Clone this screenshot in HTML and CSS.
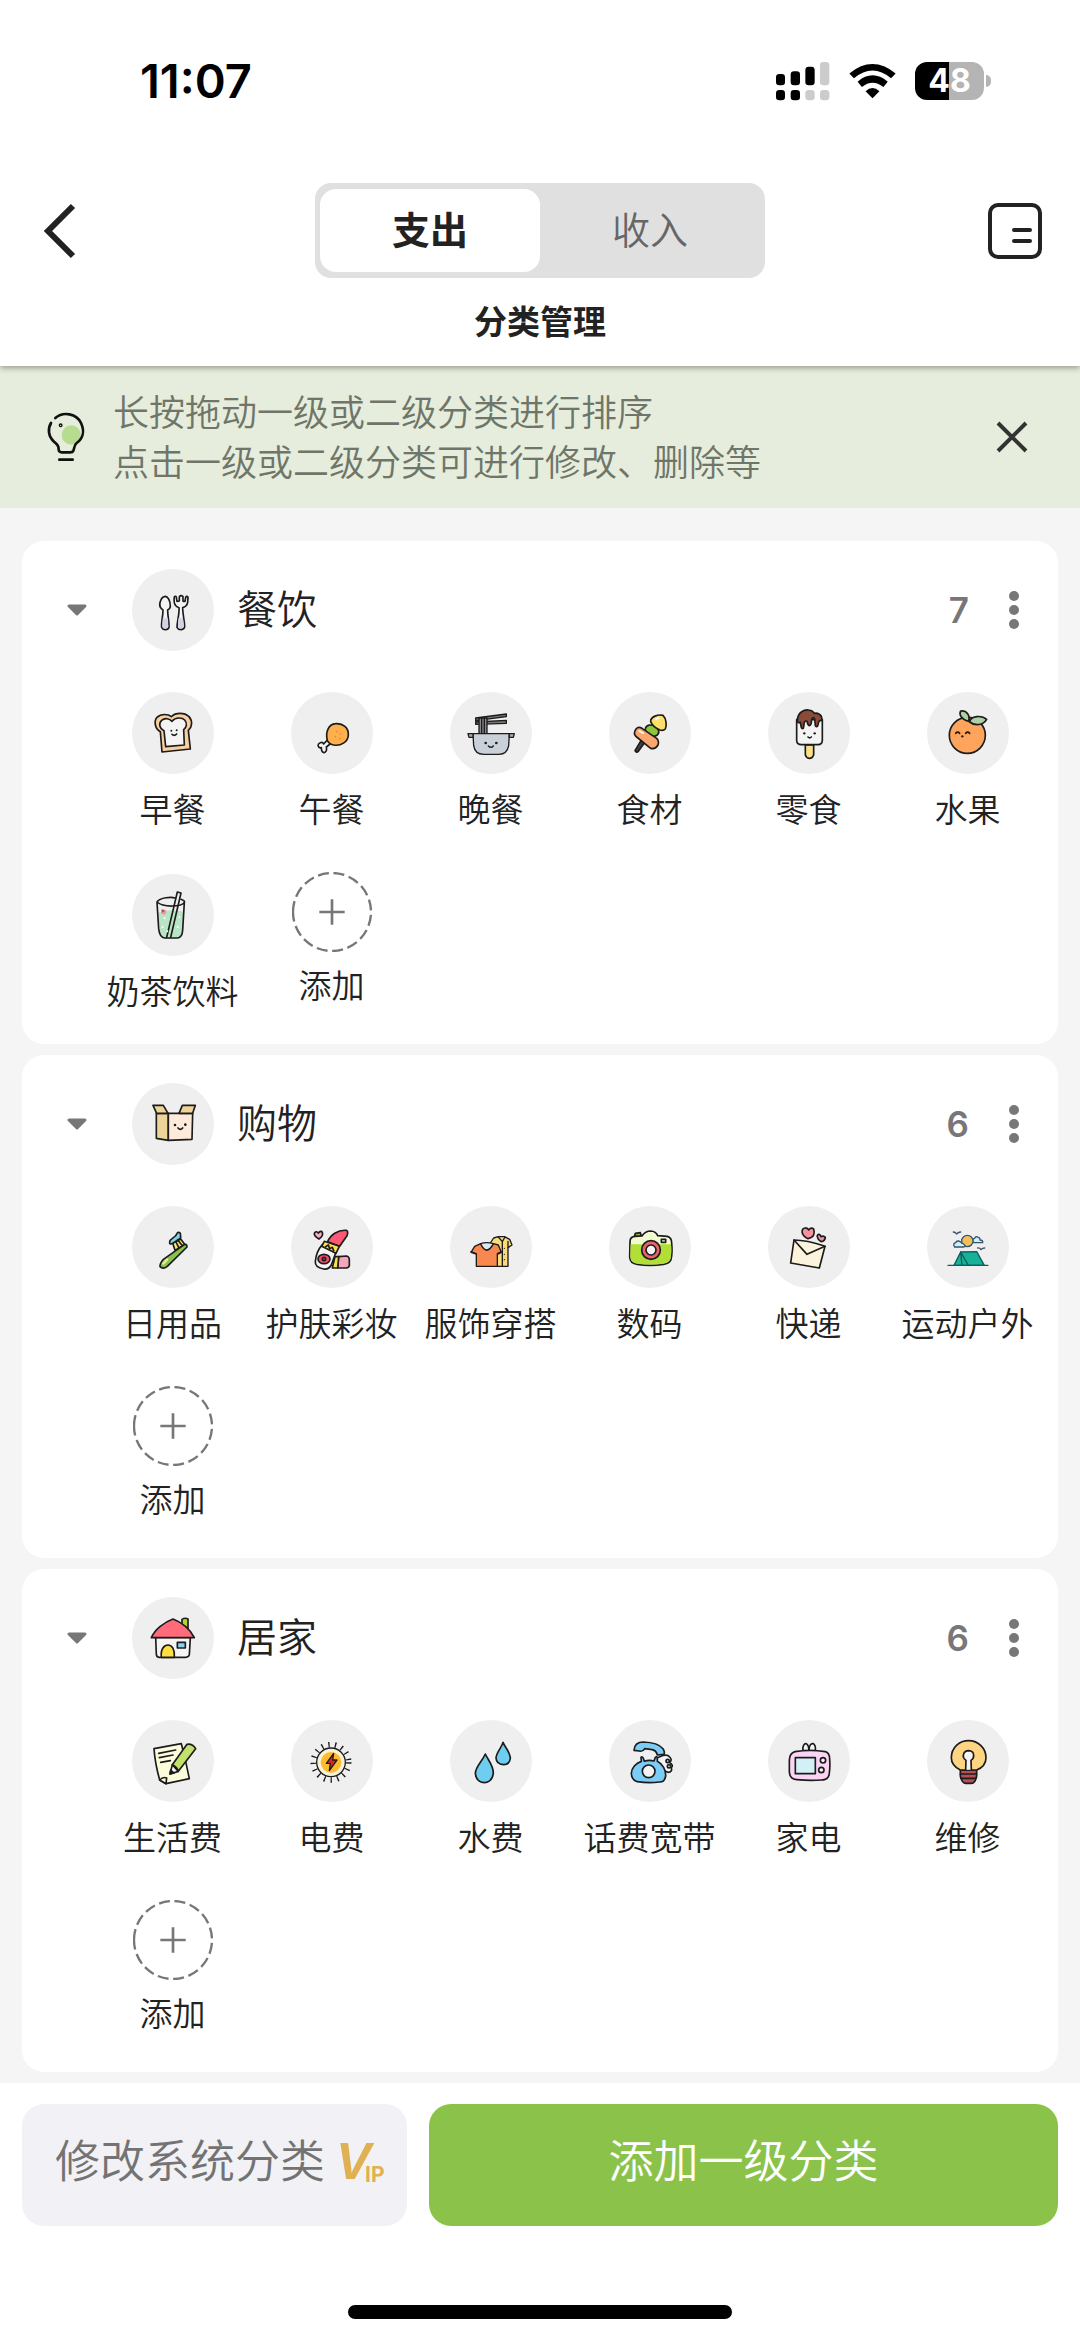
FILE: index.html
```html
<!DOCTYPE html>
<html lang="zh-CN">
<head>
<meta charset="utf-8">
<meta name="viewport" content="width=device-width, initial-scale=1">
<title>分类管理</title>
<link rel="stylesheet" href="styles.css">
</head>
<body>
<header class="header">
  <div class="status">
    <span class="status-time">11:07</span>
    <div class="status-icons">
      <svg class="signal" viewBox="0 0 162 117" aria-hidden="true">
        <rect x="0" y="36" width="27" height="34" rx="10"/><rect x="44" y="28" width="28" height="42" rx="10"/><rect x="88" y="14" width="28" height="56" rx="10"/><rect class="off" x="132" y="0" width="28" height="70" rx="10"/>
        <rect x="0" y="84" width="27" height="31" rx="10"/><rect x="44" y="84" width="28" height="31" rx="10"/><rect class="off" x="88" y="84" width="28" height="31" rx="10"/><rect class="off" x="132" y="84" width="28" height="31" rx="10"/>
      </svg>
      <svg class="wifi" viewBox="264 66 142 108" aria-hidden="true">
        <path d="M335 172 L314 151 Q335 131 356 151 Z"/>
        <path d="M290 122 Q335 84 381 122 L368 138 Q335 112 303 138 Z"/>
        <path d="M265 97 Q335 40 405 97 L391 112 Q335 65 279 112 Z"/>
      </svg>
      <div class="battery"><span class="battery-level">48</span><span class="battery-cap"></span></div>
    </div>
  </div>
  <div class="header-row">
    <button class="icon-button" type="button" aria-label="返回">
      <svg class="icon-back" viewBox="0 0 44 58"><path d="M35 4 L10 29 L35 54"/></svg>
    </button>
    <div class="toggle" role="tablist">
      <button class="toggle-item active" type="button" role="tab" aria-selected="true">支出</button>
      <button class="toggle-item" type="button" role="tab" aria-selected="false">收入</button>
    </div>
    <button class="icon-button end" type="button" aria-label="菜单">
      <svg class="icon-list" viewBox="0 0 54 56"><rect x="2" y="2" width="50" height="52" rx="8"/><path d="M26 27 H42 M26 38 H42"/></svg>
    </button>
  </div>
  <h1 class="title">分类管理</h1>
</header>

<section class="banner">
  <svg class="icon-tip" viewBox="48 62 120 156" aria-hidden="true">
    <circle class="tip-glow" cx="124" cy="134" r="29"/>
    <path d="M76 83 C100 62 140 70 153 98 C166 126 156 147 140 158 C131 165 133 176 130 181 Q128 186 120 186 H95 Q87 186 86 178 C86 166 82 163 73 155 C54 138 53 115 63 98"/>
    <path d="M88 208 H128"/>
    <circle cx="92" cy="105" r="2"/>
  </svg>
  <p class="banner-text">长按拖动一级或二级分类进行排序<br>点击一级或二级分类可进行修改、删除等</p>
  <button class="icon-button" type="button" aria-label="关闭">
    <svg class="icon-close" viewBox="0 0 34 34"><path d="M3 3 L31 31 M31 3 L3 31"/></svg>
  </button>
</section>

<main class="list">
  <section class="card">
    <div class="card-head">
      <button class="icon-button" type="button" aria-label="折叠"><svg class="icon-fold" viewBox="0 0 20 14"><path d="M2 3 H18 L10 11 Z"/></svg></button>
      <svg class="pic" viewBox="97 57 246 246" aria-hidden="true">
        <path fill="#f4f4f6" d="M197 139 C184 140 177 162 182 172 Q186 178 190 180 C190 200 184 218 186 232 Q190 240 198 239 Q206 239 208 232 C209 215 204 200 204 180 Q212 176 212 168 C212 155 206 140 197 139 Z"/>
        <path class="nostroke" fill="#d9cfe6" d="M189 205 H205 L206 231 Q197 240 188 231 Z"/>
        <path fill="#f4f4f6" d="M226 139 Q222 139 224 158 Q226 169 238 173 C240 190 232 215 232 232 Q236 240 245 239 Q254 238 255 230 C255 213 249 195 249 173 Q262 169 264 157 L265 142 Q261 136 258 142 L256 154 H250 V140 Q244 134 239 140 V153 L232 154 L230 142 Q229 138 226 139 Z"/>
        <path class="nostroke" fill="#d9cfe6" d="M236 205 H250 L253 230 Q244 240 235 231 Z"/>
      </svg>
      <h2 class="card-name">餐饮</h2>
      <span class="card-count">7</span>
      <button class="icon-button" type="button" aria-label="更多"><svg class="icon-more" viewBox="0 0 20 40"><circle cx="10" cy="6" r="5"/><circle cx="10" cy="20" r="5"/><circle cx="10" cy="34" r="5"/></svg></button>
    </div>
    <div class="grid">
      <button class="item" type="button">
        <svg class="pic" viewBox="97 427 246 246" aria-hidden="true">
          <path fill="#f8cf9e" d="M182 546 C166 538 162 515 172 503 C184 491 206 493 215 501 C228 488 254 488 268 501 C280 515 277 533 266 542 L272 598 L187 607 Z"/>
          <path fill="#f4f4f4" d="M193 543 C178 536 177 520 186 512 C196 503 210 507 217 515 C228 502 247 503 255 511 C264 521 260 534 252 540 L254 586 L198 591 Z"/>
          <path d="M217 554 Q224 560 231 553"/><circle class="dot" cx="215" cy="543" r="3"/><circle class="dot" cx="231" cy="542" r="3"/>
        </svg>
        <span class="label">早餐</span>
      </button>
      <button class="item" type="button">
        <svg class="pic" viewBox="574 427 246 246" aria-hidden="true">
          <path fill="#f4f4f4" d="M683 571 L672 583 C668 574 655 580 655 588 Q657 596 665 594 Q665 608 674 609 Q683 605 680 592 L695 580 Z"/>
          <path fill="#fdb04c" d="M683 573 C676 545 688 523 708 522 C730 520 747 535 746 555 C746 577 722 590 702 586 Q690 585 683 573 Z"/>
          <g class="nostroke" fill="#e8893a"><circle cx="711" cy="546" r="2.500"/><circle cx="722" cy="553" r="2.500"/><circle cx="707" cy="561" r="2.500"/><circle cx="720" cy="567" r="2.500"/></g>
        </svg>
        <span class="label">午餐</span>
      </button>
      <button class="item" type="button">
        <svg class="pic thin" viewBox="1051 427 246 246" aria-hidden="true">
          <path fill="#777" d="M1128 505 L1220 493 V501 L1128 513 Z M1128 517 L1220 512 V521 L1128 524 Z"/>
          <path fill="#888" d="M1138 505 H1162 V552 H1138 Z M1146 505 V552 M1154 505 V552"/>
          <path fill="#c9d0d8" d="M1120 552 H1229 L1227 588 Q1222 614 1198 614 H1152 Q1126 614 1122 588 Z"/>
          <path fill="#a5acb3" d="M1105 552 H1120 V563 H1108 Z M1229 552 H1244 L1241 563 H1229 Z"/>
          <path d="M1166 589 Q1174 597 1181 589"/><circle class="dot" cx="1158" cy="580" r="4"/><circle class="dot" cx="1190" cy="580" r="4"/>
        </svg>
        <span class="label">晚餐</span>
      </button>
      <button class="item" type="button">
        <svg class="pic" viewBox="87 427 246 246" aria-hidden="true">
          <path fill="#444" d="M183 573 L165 603 Q169 611 175 605 L193 580 Z"/>
          <ellipse fill="#8cc63f" cx="216" cy="543" rx="21" ry="16" transform="rotate(25 216 543)"/>
          <path fill="#fde06c" d="M212 516 C211 500 235 494 249 497 C260 507 260 530 256 538 Q250 544 240 541 Q220 534 212 516 Z"/>
          <path fill="#fba66d" d="M168 538 Q175 530 186 536 L230 566 Q238 574 234 586 Q226 600 212 596 L170 562 Q158 553 168 538 Z"/>
          <path stroke="#fff" d="M178 544 L190 551 M228 509 L236 505"/>
        </svg>
        <span class="label">食材</span>
      </button>
      <button class="item" type="button">
        <svg class="pic" viewBox="564 427 246 246" aria-hidden="true">
          <path fill="#fbe08a" d="M676 586 H701 V615 Q698 626 688 626 Q678 625 676 615 Z"/>
          <path fill="#f4f4f4" d="M650 510 H727 V573 Q726 585 714 585 H664 Q651 585 650 573 Z"/>
          <path fill="#8a4b38" d="M652 514 C652 486 675 479 686 481 Q699 483 703 491 Q716 488 724 500 Q729 515 719 513 Q716 514 714 526 Q711 535 706 528 L704 508 Q700 499 695 510 Q694 528 688 528 Q681 524 682 516 Q676 511 673 519 L670 536 Q664 539 663 529 L661 518 Q654 522 652 514 Z"/>
          <path d="M684 562 Q689 567 694 562"/><circle class="dot" cx="673" cy="551" r="3.500"/><circle class="dot" cx="704" cy="551" r="3.500"/>
        </svg>
        <span class="label">零食</span>
      </button>
      <button class="item" type="button">
        <svg class="pic" viewBox="1041 427 246 246" aria-hidden="true">
          <circle fill="#ffa45c" cx="1162" cy="557" r="54"/>
          <path fill="#aed0a4" d="M1165 515 C1144 508 1136 495 1142 484 C1160 482 1172 497 1165 515 Z M1169 517 C1172 498 1205 496 1220 509 C1210 527 1185 530 1169 517 Z"/>
          <path d="M1127 551 Q1133 544 1139 551 M1157 551 Q1163 544 1169 551"/><circle class="dot" cx="1147" cy="560" r="3.500"/>
        </svg>
        <span class="label">水果</span>
      </button>
      <button class="item" type="button">
        <svg class="pic" viewBox="396 72 246 246" aria-hidden="true">
          <path class="nostroke" fill="#b9e5c5" d="M474 188 Q510 175 550 185 L546 252 Q540 264 525 264 H494 Q482 262 480 250 Z"/>
          <circle class="nostroke" fill="#ee9ba5" cx="491" cy="186" r="8"/><path class="nostroke" fill="#b33849" d="M484 178 L494 182 L488 188 Z"/>
          <path d="M471 156 C480 141 515 141 526 144 M543 148 Q556 153 553 157 C544 171 490 173 471 156 L476 236 Q479 263 494 264 H533 Q547 262 548 240 L553 157"/>
          <path d="M532 126 L543 129 L512 262 M532 126 L500 262"/>
          <g class="nostroke" fill="#fff"><circle cx="494" cy="205" r="3"/><circle cx="488" cy="231" r="3"/><circle cx="538" cy="201" r="3"/><circle cx="533" cy="231" r="3"/><circle cx="502" cy="244" r="3"/></g>
        </svg>
        <span class="label">奶茶饮料</span>
      </button>
      <button class="item add" type="button">
        <svg class="ring" viewBox="-120 -120 240 240" aria-hidden="true"><path class="dash" d="M-117 0 A117 117 0 0 1 117 0 A117 117 0 0 1 -117 0"/><path class="plus" d="M-38 0 H38 M0 -38 V38"/></svg>
        <span class="label">添加</span>
      </button>
    </div>
  </section>

  <section class="card">
    <div class="card-head">
      <button class="icon-button" type="button" aria-label="折叠"><svg class="icon-fold" viewBox="0 0 20 14"><path d="M2 3 H18 L10 11 Z"/></svg></button>
      <svg class="pic" viewBox="396 697 246 246" aria-hidden="true">
        <path fill="#efd49a" d="M469 788 H505 V869 L469 863 Z"/>
        <path fill="#feeadb" d="M505 788 H578 L576 866 L505 869 Z"/>
        <path fill="#efd49a" d="M459 764 H490 L504 788 H470 Z M547 764 H586 L578 788 H537 Z"/>
        <path d="M534 832 Q541 840 548 832"/><circle class="dot" cx="525" cy="823" r="4"/><circle class="dot" cx="556" cy="822" r="4"/>
      </svg>
      <h2 class="card-name">购物</h2>
      <span class="card-count">6</span>
      <button class="icon-button" type="button" aria-label="更多"><svg class="icon-more" viewBox="0 0 20 40"><circle cx="10" cy="6" r="5"/><circle cx="10" cy="20" r="5"/><circle cx="10" cy="34" r="5"/></svg></button>
    </div>
    <div class="grid">
      <button class="item" type="button">
        <svg class="pic" viewBox="97 79 246 246" aria-hidden="true">
          <path fill="#fbe26b" d="M219 191 L243 178 L255 194 L226 212 Z"/>
          <path d="M229 187 L237 203 M236 183 L247 197"/>
          <path fill="#7fd6e0" d="M210 187 C211 175 228 175 231 163 Q235 154 242 161 Q244 172 242 177 C232 180 221 192 214 193 Q209 193 210 187 Z"/>
          <path fill="#86c34b" d="M254 195 Q262 192 262 202 L203 260 Q190 270 181 261 Q180 252 190 240 Z"/>
          <path class="nostroke" fill="#f0e6a0" d="M186 252 L202 235 L207 240 L192 256 Z"/>
        </svg>
        <span class="label">日用品</span>
      </button>
      <button class="item" type="button">
        <svg class="pic" viewBox="574 79 246 246" aria-hidden="true">
          <path fill="#f9a8c6" d="M658 178 Q640 168 645 159 Q650 153 656 160 Q664 151 668 158 Q672 168 658 178 Z"/>
          <path fill="#f4a6bc" d="M717 231 L741 229 Q750 232 749 243 V258 Q747 266 737 265 H714 Z"/>
          <path fill="#fde04c" d="M706 231 H717 L714 265 H698 Z"/>
          <path fill="#ff5877" d="M684 186 C692 166 714 150 740 152 Q747 155 742 168 L720 200 Z"/>
          <path fill="#f4f4f4" d="M668 195 L708 220 L695 256 Q687 270 672 268 Q645 262 647 245 Q650 215 668 195 Z"/>
          <path fill="#fde04c" d="M674 185 L719 200 L709 221 L666 200 Z"/>
          <path d="M678 201 L686 196 L690 207 L698 203 L702 213"/>
          <ellipse fill="#ef4f6d" cx="673" cy="238" rx="18" ry="14"/><circle cx="673" cy="238" r="5"/>
        </svg>
        <span class="label">护肤彩妆</span>
      </button>
      <button class="item" type="button">
        <svg class="pic thin" viewBox="1051 79 246 246" aria-hidden="true">
          <path fill="#f8dc7c" d="M1182 175 L1196 171 H1214 L1230 179 L1237 196 L1225 204 V260 H1180 V205 L1172 190 Z"/>
          <path d="M1196 172 L1208 186 L1216 172 M1208 186 V258 M1225 185 V204"/><circle class="dot" cx="1214" cy="206" r="2"/><circle class="dot" cx="1214" cy="224" r="2"/><circle class="dot" cx="1214" cy="240" r="2"/>
          <path fill="#f98850" d="M1143 192 Q1161 230 1181 192 L1196 196 L1205 218 L1193 224 V260 H1130 V223 L1114 218 L1125 200 Z"/>
          <path fill="#dfe8ee" d="M1143 192 Q1161 186 1181 192 Q1161 230 1143 192 Z"/>
          <path fill="#8ed0c0" d="M1114 216 L1129 222 M1205 216 L1193 222"/>
        </svg>
        <span class="label">服饰穿搭</span>
      </button>
      <button class="item" type="button">
        <svg class="pic" viewBox="87 79 246 246" aria-hidden="true">
          <path fill="#90b53c" d="M163 171 L166 161 L181 159 L184 169 Z"/>
          <path fill="#f1fbcf" d="M150 186 Q150 170 166 170 L186 169 Q196 154 212 154 Q228 155 233 168 L262 170 Q275 173 275 190 Q278 220 273 240 Q268 252 250 254 Q210 260 172 254 Q150 252 149 232 Z"/>
          <path class="nostroke" fill="#b2df35" d="M152 194 H273 Q276 220 271 238 Q267 250 250 252 Q210 257 172 252 Q152 249 151 232 Z"/>
          <circle fill="#e8636a" cx="213" cy="211" r="28"/><circle fill="#f4f4f4" cx="213" cy="211" r="15"/>
          <rect fill="#f4f4f4" x="244" y="179" width="13" height="9"/>
        </svg>
        <span class="label">数码</span>
      </button>
      <button class="item" type="button">
        <svg class="pic" viewBox="564 79 246 246" aria-hidden="true">
          <path fill="#f8909f" d="M684 177 C660 166 664 146 675 145 Q683 144 686 151 Q693 142 701 148 C706 162 701 174 684 177 Z M723 186 C708 175 710 164 717 164 Q722 165 723 171 Q731 167 736 173 Q735 184 723 186 Z"/>
          <path fill="#fcf3dc" d="M642 181 Q680 181 735 200 L718 265 L632 250 Z"/>
          <path d="M642 181 L681 224 L735 200"/>
        </svg>
        <span class="label">快递</span>
      </button>
      <button class="item" type="button">
        <svg class="pic thin" viewBox="1041 79 246 246" aria-hidden="true">
          <path stroke="#3d5160" d="M1120 157 Q1126 157 1130 163 Q1135 157 1142 157 M1193 205 Q1199 204 1203 210 Q1207 205 1214 205"/>
          <path stroke="#33566b" fill="#cdeffa" d="M1179 187 Q1176 177 1184 176 Q1187 168 1195 173 Q1201 175 1200 181 Q1210 181 1208 189 H1182 Z"/>
          <circle stroke="#33566b" fill="#f6bf55" cx="1162" cy="184" r="17"/>
          <path stroke="#33566b" fill="#cdeffa" d="M1124 202 Q1117 192 1127 189 Q1132 180 1142 187 Q1144 192 1150 192 Q1158 198 1152 202 Z"/>
          <path stroke="#0f5d5c" fill="#18b198" d="M1142 217 L1190 216 L1213 257 H1122 Z"/>
          <path stroke="#0f5d5c" d="M1104 257 H1224 M1142 217 L1146 257 M1142 217 L1165 257"/>
        </svg>
        <span class="label">运动户外</span>
      </button>
      <button class="item add" type="button">
        <svg class="ring" viewBox="-120 -120 240 240" aria-hidden="true"><path class="dash" d="M-117 0 A117 117 0 0 1 117 0 A117 117 0 0 1 -117 0"/><path class="plus" d="M-38 0 H38 M0 -38 V38"/></svg>
        <span class="label">添加</span>
      </button>
    </div>
  </section>

  <section class="card">
    <div class="card-head">
      <button class="icon-button" type="button" aria-label="折叠"><svg class="icon-fold" viewBox="0 0 20 14"><path d="M2 3 H18 L10 11 Z"/></svg></button>
      <svg class="pic" viewBox="397 739 246 246" aria-hidden="true">
        <path fill="#b5d334" d="M547 822 V806 Q556 800 565 805 V835 Z"/>
        <path fill="#f4f4f4" d="M468 860 H572 L569 912 Q567 920 558 920 H478 Q470 919 470 910 Z"/>
        <path fill="#ff6b7a" d="M455 861 C465 838 492 815 520 805 C548 815 573 838 584 861 Z"/>
        <path fill="#ffdf3f" d="M485 920 C482 894 494 883 505 883 C517 883 526 896 524 920 Z"/>
        <rect fill="#8ed0ee" x="533" y="875" width="24" height="17"/>
      </svg>
      <h2 class="card-name">居家</h2>
      <span class="card-count">6</span>
      <button class="icon-button" type="button" aria-label="更多"><svg class="icon-more" viewBox="0 0 20 40"><circle cx="10" cy="6" r="5"/><circle cx="10" cy="20" r="5"/><circle cx="10" cy="34" r="5"/></svg></button>
    </div>
    <div class="grid">
      <button class="item" type="button">
        <svg class="pic" viewBox="97 60 246 246" aria-hidden="true">
          <path fill="#fcfbdc" d="M163 146 L245 131 Q258 180 269 236 L199 251 L180 240 Q166 190 163 146 Z"/>
          <path fill="#fcfbdc" d="M180 240 Q190 229 201 234 L199 251 Z"/>
          <path d="M177 160 L228 150 M179 173 L220 165 M183 187 L212 182"/>
          <path fill="#f4f4f4" d="M218 194 L236 214 L211 222 Z"/>
          <path fill="#c2e06c" d="M218 194 L262 133 Q278 130 288 146 L236 214 Q234 202 218 194 Z"/>
          <path fill="#1c1c1c" d="M213 210 L223 219 L211 222 Z"/>
        </svg>
        <span class="label">生活费</span>
      </button>
      <button class="item" type="button">
        <svg class="pic thin" viewBox="574 60 246 246" aria-hidden="true">
          <circle class="rays" cx="694" cy="187" r="53"/>
          <circle fill="#fbf2d8" cx="694" cy="187" r="43"/><circle class="nostroke" fill="#fdbb30" cx="694" cy="187" r="31"/>
          <path fill="#e2231a" d="M702 160 L680 190 H692 L689 212 L712 180 H699 Z"/>
        </svg>
        <span class="label">电费</span>
      </button>
      <button class="item" type="button">
        <svg class="pic" viewBox="1051 60 246 246" aria-hidden="true">
          <path fill="#6fcdf0" d="M1157 162 C1165 180 1182 198 1181 220 Q1178 246 1154 248 Q1129 246 1127 220 C1128 198 1148 184 1157 162 Z M1210 127 C1216 142 1232 157 1232 175 Q1230 193 1211 194 Q1190 192 1189 174 C1190 157 1206 143 1210 127 Z"/>
        </svg>
        <span class="label">水费</span>
      </button>
      <button class="item" type="button">
        <svg class="pic" viewBox="87 60 246 246" aria-hidden="true">
          <path fill="#f4f4f4" d="M236 172 L250 166 Q264 164 269 171 Q278 180 269 187 Q282 197 274 203 Q278 216 264 217 L252 212"/>
          <circle cx="263" cy="183" r="5"/><circle cx="267" cy="199" r="5"/>
          <path fill="#7ccdf5" d="M162 151 C163 131 175 126 190 126 C218 127 240 135 249 146 Q255 156 252 163 L232 165 Q229 149 212 148 L194 146 Q187 156 178 153 Z"/>
          <path fill="#7ccdf5" d="M184 184 L183 172 Q187 168 190 175 L193 184 Q206 179 222 183 L226 172 Q231 168 232 174 V184 C248 192 258 210 257 228 Q254 247 238 246 Q206 250 172 245 Q154 240 154 220 C154 204 168 189 184 184 Z"/>
          <circle fill="#f4f4f4" cx="206" cy="214" r="19"/>
        </svg>
        <span class="label">话费宽带</span>
      </button>
      <button class="item" type="button">
        <svg class="pic" viewBox="564 60 246 246" aria-hidden="true">
          <path fill="#f4f4f4" d="M669 152 C667 139 672 130 679 131 Q686 134 687 151 C687 136 693 129 700 131 Q708 136 706 152 Z"/>
          <path fill="#fbd3f3" d="M645 155 Q690 148 736 155 Q749 158 749 178 Q751 205 747 226 Q743 240 725 240 Q690 243 650 239 Q629 237 628 215 V180 Q629 159 645 155 Z"/>
          <rect fill="#d3f0f6" x="646" y="173" width="60" height="48"/>
          <circle fill="#f4f4f4" cx="729" cy="181" r="8"/><circle fill="#f4f4f4" cx="724" cy="210" r="8"/>
        </svg>
        <span class="label">家电</span>
      </button>
      <button class="item" type="button">
        <svg class="pic" viewBox="1041 60 246 246" aria-hidden="true">
          <path fill="#b94c57" d="M1141 210 H1190 V228 Q1186 249 1175 250 H1156 Q1145 248 1141 228 Z"/><path d="M1141 222 H1190 M1143 235 H1188"/>
          <path fill="#fdd482" d="M1141 210 C1123 201 1114 188 1114 173 C1114 142 1138 122 1166 122 C1195 122 1218 145 1218 173 C1218 190 1207 203 1190 210 Z"/>
          <path fill="#f4f4f4" d="M1157 209 L1158 181 Q1148 174 1150 165 Q1153 152 1166 152 Q1180 153 1181 165 Q1182 175 1173 181 L1174 209"/>
        </svg>
        <span class="label">维修</span>
      </button>
      <button class="item add" type="button">
        <svg class="ring" viewBox="-120 -120 240 240" aria-hidden="true"><path class="dash" d="M-117 0 A117 117 0 0 1 117 0 A117 117 0 0 1 -117 0"/><path class="plus" d="M-38 0 H38 M0 -38 V38"/></svg>
        <span class="label">添加</span>
      </button>
    </div>
  </section>
</main>

<footer class="footer">
  <div class="actions">
    <button class="action secondary" type="button">
      <span>修改系统分类</span>
      <svg class="vip" viewBox="0 0 48 44" role="img" aria-label="VIP"><text class="vip-v" x="-4" y="39">V</text><text class="vip-ip" x="25" y="42">IP</text></svg>
    </button>
    <button class="action primary" type="button">添加一级分类</button>
  </div>
  <div class="home-bar"></div>
</footer>
</body>
</html>
```
FILE: styles.css
```css
* { box-sizing: border-box; }

body {
  margin: 0;
  min-height: 100vh;
  display: flex;
  flex-direction: column;
  background: #f5f5f5;
  color: #222;
  font-family: Inter, "Noto Sans CJK SC", sans-serif;
  font-weight: 350;
}

button {
  margin: 0;
  padding: 0;
  border: 0;
  background: none;
  color: inherit;
  font: inherit;
}

svg { display: block; flex: none; }
h1, h2, p { margin: 0; }

/* Header with the status bar on top */
.header {
  position: relative;
  z-index: 1;
  padding: 55px 38px 20px;
  background: #fff;
  box-shadow: 0 2px 6px rgba(0, 0, 0, 0.35);
}
.status {
  display: flex;
  justify-content: space-between;
  align-items: center;
  margin-bottom: 76px;
  padding: 0 51px 0 102px;
}
.status-time { font-size: 47px; line-height: 52px; font-weight: 600; color: #000; }
.status-icons { display: flex; align-items: center; gap: 19px; }
.signal { width: 54px; height: 39px; }
.signal .off { fill: #ccc; }
.wifi { width: 47px; height: 36px; }
.battery { display: flex; align-items: center; gap: 2px; }
.battery-level {
  width: 69px;
  border-radius: 12px;
  background: linear-gradient(to right, #000 34px, #b4b4b4 34px);
  color: #fff;
  font-size: 32px;
  line-height: 38px;
  font-weight: 700;
  text-align: center;
}
.battery-cap { width: 5px; height: 12px; border-radius: 0 6px 6px 0; background: #b4b4b4; }

.header-row { display: grid; grid-template-columns: 1fr auto 1fr; align-items: center; }
.icon-button { display: flex; flex: none; }
.icon-button.end { justify-self: end; }
.icon-back { width: 44px; height: 58px; fill: none; stroke: #222; stroke-width: 6; }
.icon-list { width: 54px; height: 56px; fill: none; stroke: #222; stroke-width: 4; stroke-linecap: round; }
.toggle {
  display: grid;
  grid-template-columns: 220px 220px;
  padding: 6px 5px;
  border-radius: 16px;
  background: #e0e0e0;
}
.toggle-item { border-radius: 16px; font-size: 38px; line-height: 83px; color: #666; }
.toggle-item.active { background: #fff; color: #222; font-weight: 700; }
.title { margin-top: 20px; font-size: 33px; line-height: 48px; font-weight: 700; text-align: center; }

/* Tip banner */
.banner {
  display: flex;
  align-items: center;
  gap: 27px;
  padding: 20px 51px 20px 46px;
  background: #e6eddc;
}
.banner-text { flex: 1; padding-top: 2px; font-size: 36px; line-height: 50px; color: #6f7669; }
.icon-tip { width: 40px; height: 52px; fill: none; stroke: #111; stroke-width: 8; stroke-linecap: round; stroke-linejoin: round; }
.icon-tip .tip-glow { fill: #b7db8f; stroke: none; }
.icon-close { width: 34px; height: 34px; stroke: #333; stroke-width: 4; }

/* Category cards */
.list { flex: 1; display: flex; flex-direction: column; gap: 11px; padding: 33px 22px 11px; }
.card { padding: 28px 11px 30px 71px; border-radius: 22px; background: #fff; }
.card-head { display: flex; align-items: center; margin: 0 23px 39px -26px; }
.icon-fold { width: 20px; height: 14px; margin-right: 45px; fill: #777; stroke: #777; stroke-width: 3; stroke-linejoin: round; }
.card-name { flex: 1; margin-left: 23px; font-size: 40px; line-height: 56px; font-weight: 350; }
.card-count { margin-right: 35px; font-size: 35px; line-height: 44px; font-weight: 600; color: #777; }
.icon-more { width: 20px; height: 40px; fill: #777; }

.grid { display: grid; grid-template-columns: repeat(6, 1fr); grid-auto-rows: minmax(142px, auto); row-gap: 40px; }
.item { display: flex; flex-direction: column; align-items: center; gap: 14px; padding-top: 2px; }
.item.add { gap: 12px; padding-top: 0; justify-content: flex-start; }
.label { font-size: 33px; line-height: 44px; white-space: nowrap; }

.pic {
  width: 82px;
  height: 82px;
  border-radius: 50%;
  background: #efefef;
  fill: none;
  stroke: #1c1c1c;
  stroke-width: 5;
  stroke-linecap: round;
  stroke-linejoin: round;
}
.pic.thin { stroke-width: 4; }
.pic .nostroke { stroke: none; }
.pic .dot { fill: #1c1c1c; stroke: none; }
.pic .rays { stroke-width: 17; stroke-linecap: butt; stroke-dasharray: 4 16; }

.ring { width: 80px; height: 80px; fill: none; stroke: #777; }
.ring .dash { stroke-width: 7; stroke-dasharray: 33 14; }
.ring .plus { stroke-width: 8; }

/* Bottom actions */
.footer { padding: 21px 22px 22px; background: #fff; }
.actions { display: flex; gap: 22px; }
.action {
  display: flex;
  align-items: center;
  justify-content: center;
  height: 122px;
  padding-bottom: 6px;
  border-radius: 22px;
  font-size: 45px;
  line-height: 64px;
}
.secondary { width: 385px; gap: 15px; padding-left: 14px; background: #f1f1f6; color: #737373; }
.primary { flex: 1; background: #8bc34a; color: #fff; }
.vip { width: 48px; height: 44px; overflow: visible; fill: #e0b153; font-weight: 700; }
.vip-v { font-family: "Liberation Sans", Arial, sans-serif; font-size: 52px; font-style: italic; }
.vip-ip { font-size: 21px; }
.home-bar { width: 384px; max-width: 100%; height: 14px; margin: 79px auto 0; border-radius: 7px; background: #000; }
```
